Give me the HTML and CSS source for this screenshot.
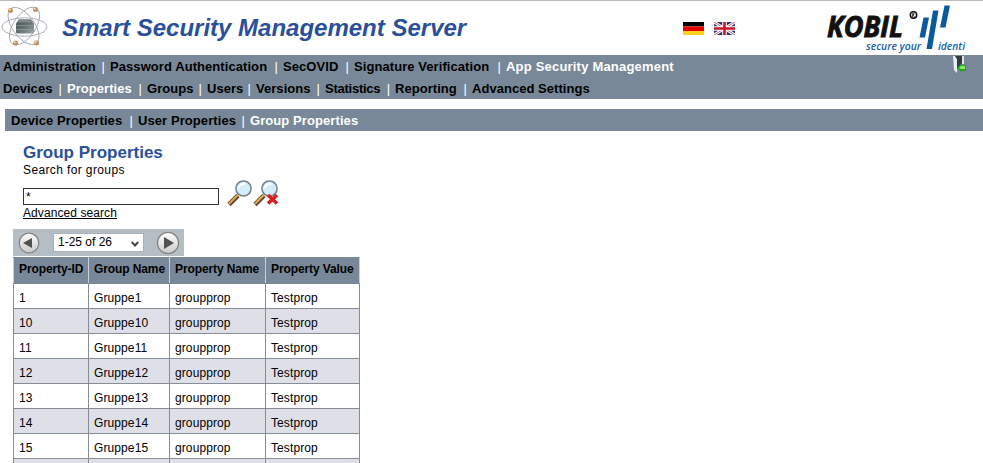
FILE: index.html
```
<!DOCTYPE html>
<html lang="en">
<head>
<meta charset="utf-8">
<title>Smart Security Management Server</title>
<link rel="stylesheet" href="styles.css">
</head>
<body>
<header class="header">
  <svg class="atom" width="48" height="44" viewBox="0 0 48 44">
    <defs>
      <linearGradient id="box" x1="0" y1="0" x2="1" y2="1"><stop offset="0" stop-color="#414b4c"/><stop offset=".55" stop-color="#687374"/><stop offset="1" stop-color="#a5adad"/></linearGradient>
    </defs>
    <g fill="none" stroke="#a3a5b0" stroke-width=".9">
      <ellipse cx="23.500" cy="22" rx="22.400" ry="9.200"/>
      <ellipse cx="22.500" cy="21" rx="21.500" ry="11" transform="rotate(54 22.500 21)"/>
      <ellipse cx="23.500" cy="21" rx="21.500" ry="11" transform="rotate(-56 23.500 21)"/>
    </g>
    <path d="M18 14.500h12l3 4v9l-1 1H16l-1-1v-9z" fill="url(#box)"/>
    <path d="M18 14.500h12l2 3H16z" fill="#7c8889"/>
    <path d="M15 20.500h18M15 24.500h18" stroke="#8e9999" stroke-width=".7"/>
    <g fill="#bd925a"><circle cx="9.500" cy="5.500" r="2.500"/><circle cx="34.500" cy="4.500" r="2.500"/><circle cx="14.500" cy="38" r="2.500"/><circle cx="35.500" cy="38" r="2.500"/></g>
    <g fill="#f3dfb8"><circle cx="8.800" cy="4.800" r="1"/><circle cx="33.800" cy="3.800" r="1"/><circle cx="13.800" cy="37.300" r="1"/><circle cx="34.800" cy="37.300" r="1"/></g>
  </svg>
  <h1 class="title">Smart Security Management Server</h1>
  <div class="flags">
    <svg width="21" height="13" viewBox="0 0 21 13"><path fill="#000" d="M0 0h21v4.500H0z"/><path fill="#e60000" d="M0 4.500h21V9H0z"/><path fill="#ffd21a" d="M0 9h21v4H0z"/></svg>
    <svg width="21" height="13" viewBox="0 0 21 13"><path fill="#26366f" d="M0 0h21v13H0z"/><path d="M0 0l21 13M21 0L0 13" stroke="#fff" stroke-width="2.800"/><path d="M0 0l21 13M21 0L0 13" stroke="#c8324a" stroke-width=".8"/><path d="M10.500 0v13M0 6.500h21" stroke="#fff" stroke-width="4.600"/><path d="M10.500 0v13M0 6.500h21" stroke="#c8142f" stroke-width="2.600"/></svg>
  </div>
  <svg class="kobil" width="141" height="54" viewBox="0 0 141 54">
    <text class="brand" x="1" y="36" textLength="76" lengthAdjust="spacingAndGlyphs">KOBIL</text>
    <circle cx="87.500" cy="14" r="3.200" fill="none" stroke="#111" stroke-width="1.500"/>
    <path d="M86.700 16v-3.600h1.300v1.500h-1.300l1.800 2" fill="none" stroke="#111" stroke-width=".8"/>
    <g fill="#0b5a9d"><path d="M97.500 16.500h5.500l-4 20h-5.500z"/><path d="M107 9.500h5.500L106 48h-5.500z"/><path d="M118.500 4.500h5.500l-4.500 22H114z"/></g>
    <text class="claim" x="40" y="49" textLength="55" lengthAdjust="spacingAndGlyphs">secure your</text>
    <text class="claim" x="112" y="49" textLength="27" lengthAdjust="spacingAndGlyphs">identi</text>
  </svg>
</header>

<nav class="nav">
  <ul class="menu main">
    <li>Administration</li><li>Password Authentication</li><li>SecOVID</li><li>Signature Verification</li><li class="active">App Security Management</li>
  </ul>
  <ul class="menu second">
    <li>Devices</li><li class="active">Properties</li><li>Groups</li><li>Users</li><li>Versions</li><li class="tight">Statistics</li><li>Reporting</li><li>Advanced Settings</li>
  </ul>
  <svg class="logout" width="14" height="18" viewBox="0 0 14 18"><path fill="#e9eef0" d="M0 0h2l2 3v14l-3-3z"/><path fill="#333b3f" d="M2 0h7v13H4V3z"/><path fill="#dfe6e8" d="M9 0h2v8H9z"/><path fill="#28a51e" d="M4 12l5-5v2h4v6H9v2z"/><path fill="#86e765" d="M6 12l3-3v1h3v3H8z"/></svg>
</nav>
<nav class="subnav">
  <ul class="menu third">
    <li>Device Properties</li><li>User Properties</li><li class="active">Group Properties</li>
  </ul>
</nav>

<main class="content">
  <section class="search">
    <h2>Group Properties</h2>
    <p class="hint">Search for groups</p>
    <div class="search-row">
      <input class="query" type="text" value="*">
      <svg class="lens" width="26" height="27" viewBox="0 0 26 27"><path d="M2 24.500l9-9" stroke="#694a24" stroke-width="4.600"/><path d="M2 23.800l9-9" stroke="#d8a760" stroke-width="2.200"/><circle cx="16.500" cy="8.500" r="7.600" fill="#d5edf9" stroke="#73838d" stroke-width="1.500"/><path d="M11.500 8c1-3 4-5 7-4" stroke="#fff" stroke-width="2" fill="none"/></svg>
      <svg class="lens" width="26" height="27" viewBox="0 0 26 27"><path d="M2 24.500l9-9" stroke="#694a24" stroke-width="4.600"/><path d="M2 23.800l9-9" stroke="#d8a760" stroke-width="2.200"/><circle cx="16.500" cy="8.500" r="7.600" fill="#d5edf9" stroke="#73838d" stroke-width="1.500"/><path d="M11.500 8c1-3 4-5 7-4" stroke="#fff" stroke-width="2" fill="none"/><path d="M15 15l9 8.500M24 15l-9 8.500" stroke="#d61f24" stroke-width="3.600"/></svg>
    </div>
    <a class="advanced">Advanced search</a>
  </section>

  <div class="pager">
    <svg width="22" height="22" viewBox="0 0 22 22"><defs><linearGradient id="knob" x1="0" y1="0" x2="0" y2="1"><stop offset="0" stop-color="#fff"/><stop offset="1" stop-color="#c9c9c9"/></linearGradient></defs><circle cx="11" cy="11" r="9.800" fill="url(#knob)" stroke="#868686" stroke-width="1.300"/><path fill="#505050" d="M5 11l9-5v10z"/></svg>
    <div class="select"><span>1-25 of 26</span><svg width="8" height="7" viewBox="0 0 8 7"><path d="M.8 2L4 5.500 7.200 2" fill="none" stroke="#444" stroke-width="1.900"/></svg></div>
    <svg width="24" height="24" viewBox="0 0 24 24"><circle cx="12" cy="12" r="10.600" fill="url(#knob)" stroke="#868686" stroke-width="1.300"/><path fill="#505050" d="M8 6l10 6-10 6z"/></svg>
  </div>

  <table class="grid">
    <colgroup><col class="c1"><col class="c2"><col class="c3"><col class="c4"></colgroup>
    <thead><tr><th>Property-ID</th><th>Group Name</th><th>Property Name</th><th>Property Value</th></tr></thead>
    <tbody>
      <tr><td>1</td><td>Gruppe1</td><td>groupprop</td><td>Testprop</td></tr>
      <tr><td>10</td><td>Gruppe10</td><td>groupprop</td><td>Testprop</td></tr>
      <tr><td>11</td><td>Gruppe11</td><td>groupprop</td><td>Testprop</td></tr>
      <tr><td>12</td><td>Gruppe12</td><td>groupprop</td><td>Testprop</td></tr>
      <tr><td>13</td><td>Gruppe13</td><td>groupprop</td><td>Testprop</td></tr>
      <tr><td>14</td><td>Gruppe14</td><td>groupprop</td><td>Testprop</td></tr>
      <tr><td>15</td><td>Gruppe15</td><td>groupprop</td><td>Testprop</td></tr>
      <tr><td></td><td></td><td></td><td></td></tr>
    </tbody>
  </table>
</main>
</body>
</html>
```
FILE: styles.css
```
* { box-sizing: border-box; }
html, body { height: 100%; }
body {
  margin: 0;
  overflow: hidden;
  background: #fff;
  color: #000;
  font-family: "Liberation Sans", Arial, sans-serif;
  font-size: 12px;
}
h1, h2, p, ul { margin: 0; padding: 0; }
svg { display: block; flex: none; }

.header {
  display: flex;
  height: 55px;
  border-top: 1px solid #b9b9b9;
}
.atom { margin: 4px 0 0 1px; }
.title {
  width: 621px;
  margin-left: 13px;
  padding-top: 13px;
  color: #2b509a;
  font-size: 24px;
  font-style: italic;
  line-height: 28px;
  white-space: nowrap;
}
.flags { display: flex; gap: 10px; width: 143px; padding-top: 21px; }
.kobil { overflow: hidden; }
.brand { font: italic bold 29px "Open Sans", sans-serif; fill: #111; stroke: #111; stroke-width: 0.9px; }
.claim { font: italic 600 11px "Open Sans", sans-serif; fill: #1a62a2; }

.nav {
  position: relative;
  height: 44px;
  padding-left: 3px;
  background: #788898;
}
.menu {
  display: grid;
  height: 22px;
  list-style: none;
  font-size: 13px;
  font-weight: bold;
  line-height: 23px;
  white-space: nowrap;
}
.main { grid-template-columns: 107px 173px 71px 152px auto; letter-spacing: 0.07px; }
.second { grid-template-columns: 64px 80px 60px 49px 69px 70px 77px auto; letter-spacing: 0.04px; }
.third { grid-template-columns: 127px 112px auto; letter-spacing: 0.08px; }
.menu li { display: flex; justify-content: space-between; }
.menu li:not(:last-child)::after {
  content: "|";
  margin-right: 5px;
  color: #fff;
  font-weight: normal;
}
.menu .active { color: #fff; }
.main .active { letter-spacing: 0.2px; }
.menu .tight { letter-spacing: -0.25px; }
.logout { position: absolute; top: 1px; left: 953px; }
.subnav {
  height: 22px;
  margin: 10px 0 0 5px;
  padding-left: 6px;
  background: #788898;
}

.content { padding-left: 13px; }
.search { height: 98px; padding: 12px 0 0 10px; }
.search h2 {
  color: #2b509a;
  font-size: 17px;
  line-height: 19px;
}
.hint { line-height: 17px; height: 18px; letter-spacing: 0.38px; }
.search-row { display: flex; height: 26px; }
.query {
  width: 196px;
  height: 17px;
  margin: 8px 8px 0 0;
  padding: 0 2px;
  border: 1px solid #333;
  font: 12px "Liberation Sans", Arial, sans-serif;
}
.advanced { display: block; width: max-content; line-height: 15px; text-decoration: underline; letter-spacing: 0.08px; }

.pager {
  display: flex;
  align-items: center;
  width: 171px;
  height: 27px;
  padding-left: 5px;
  background: #b5bec5;
}
.select {
  display: flex;
  align-items: center;
  justify-content: space-between;
  width: 91px;
  height: 19px;
  margin: 0 12px 0 13px;
  padding: 0 4px 2px 4px;
  border: 1px solid #a9b0b6;
  background: #fff;
}
.select svg { margin-top: 3px; }

.grid {
  width: 347px;
  margin-top: 1px;
  border-collapse: collapse;
  table-layout: fixed;
}
.c1 { width: 75px; }
.c2 { width: 81px; }
.c3 { width: 96px; }
.c4 { width: 94px; }
.grid th, .grid td {
  height: 25px;
  padding: 4px 0 0 5px;
  border: 1px solid #858e96;
  line-height: 20px;
  text-align: left;
  white-space: nowrap;
}
.grid td { letter-spacing: 0.1px; }
.grid th {
  height: 26px;
  padding: 0 0 3px 5px;
  border-color: #788898 #c9d0d6;
  background: #788898;
  letter-spacing: -0.1px;
}
.grid tbody tr:nth-child(even) { background: #dfe0e7; }
```
